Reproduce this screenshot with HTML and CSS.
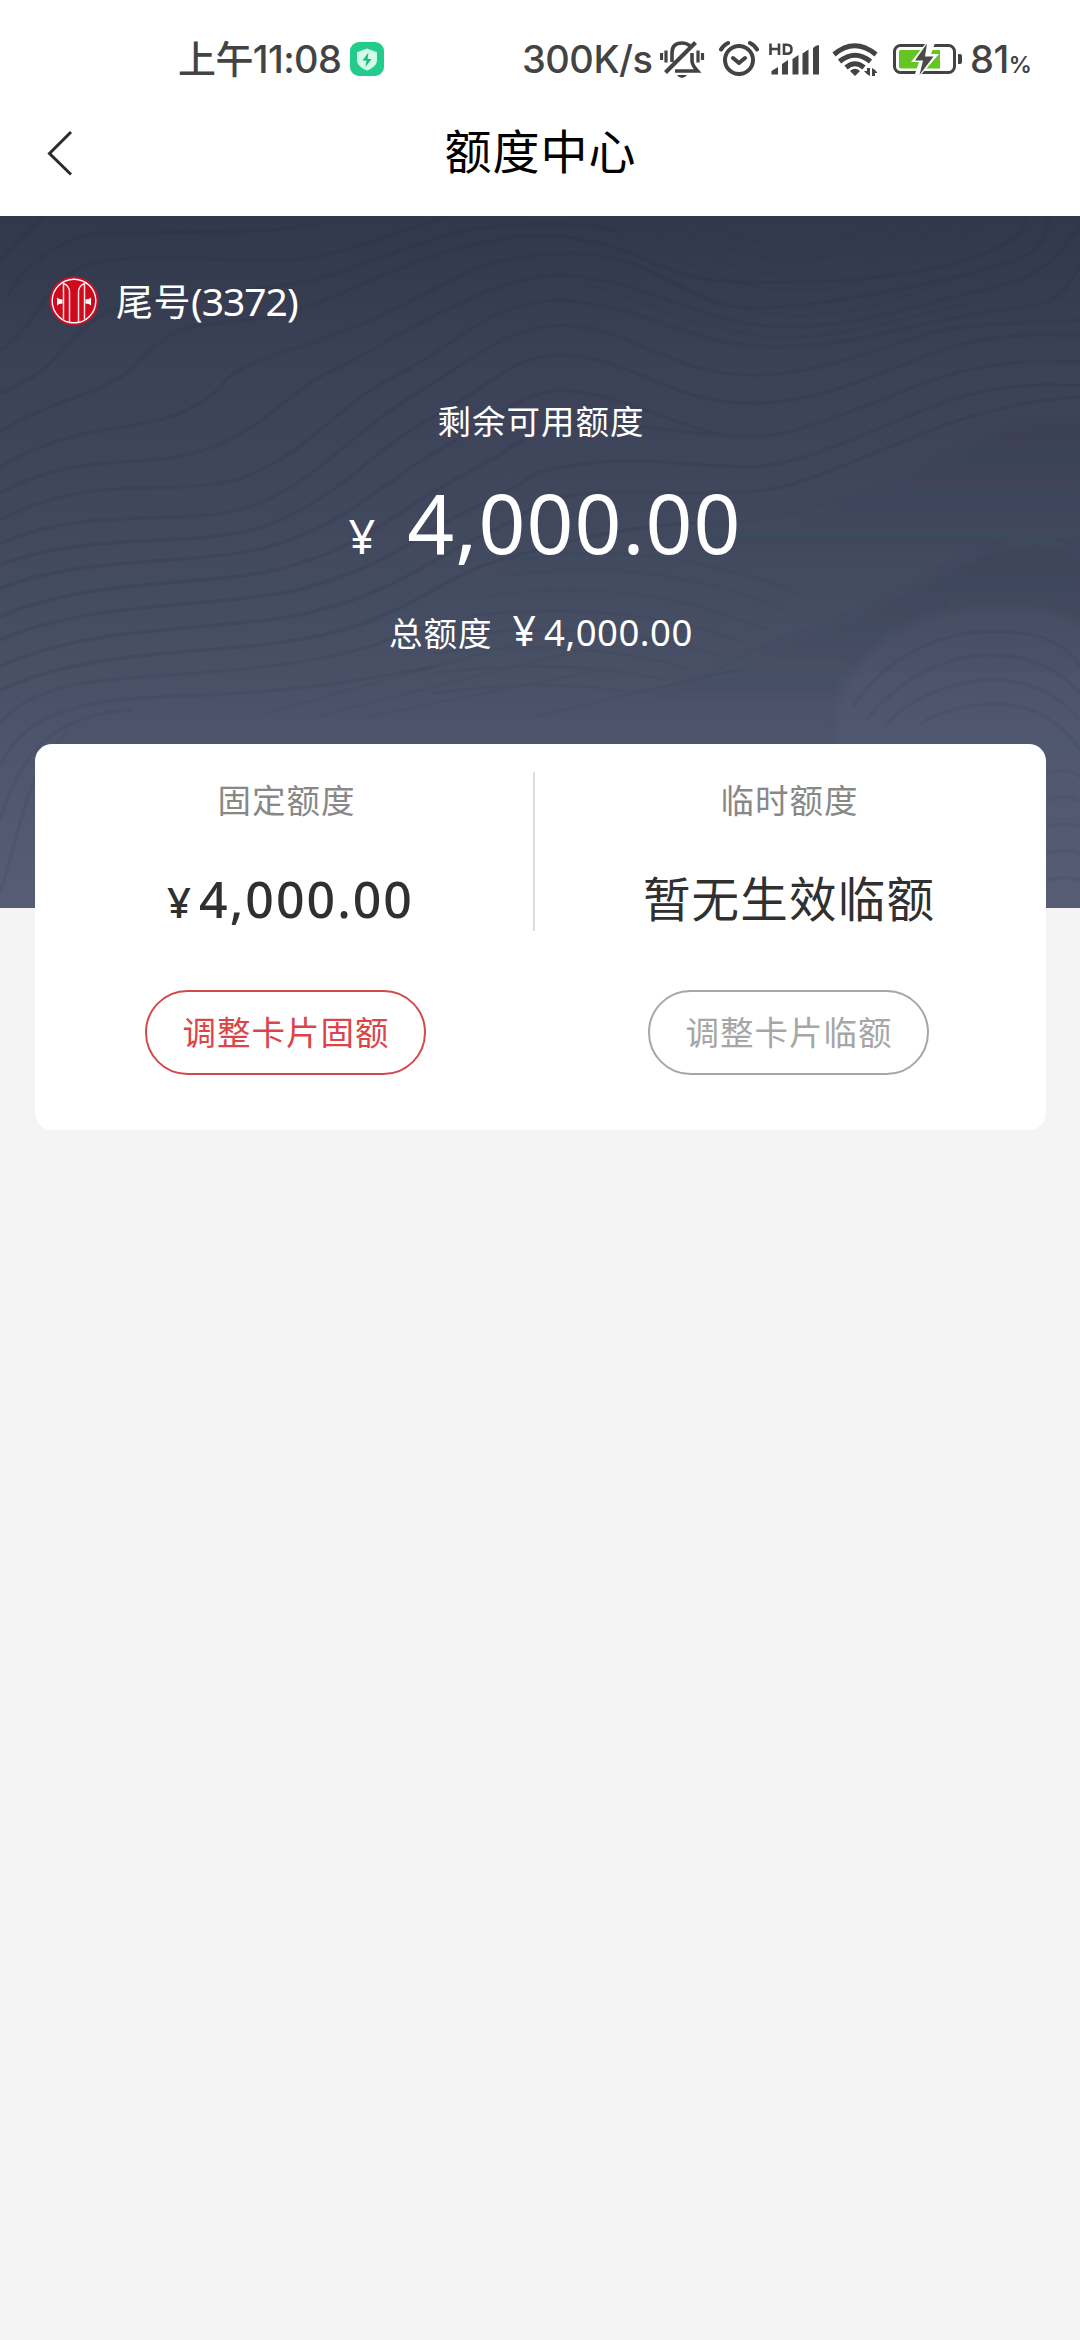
FILE: index.html
```html
<!DOCTYPE html>
<html lang="zh-CN">
<head>
<meta charset="utf-8">
<title>额度中心</title>
<link rel="stylesheet" href="styles.css">
</head>
<body>
<div class="status">
  <span class="time">上午11:08</span>
  <svg class="badge" width="34" height="34" viewBox="0 0 34 34">
    <rect width="34" height="34" rx="9" fill="#23cc8d"/>
    <path d="M17 6.500l10 3.800v7.700c0 5-4.500 8.400-10 10.500c-5.500-2.100-10-5.500-10-10.500v-7.700z" fill="#d3fbea"/>
    <path d="M18.500 10.500l-6 8h4l-1 6.500l6-8h-4z" fill="#1fb980"/>
  </svg>
  <span class="speed">300K/s</span>
  <svg class="bell" width="45" height="40" viewBox="659 39 45 40" fill="none" stroke="#434343" stroke-width="3.200">
    <path d="M660.500 53v7M665 50.500v12M697 50.500v12M701.500 53v7"/>
    <path d="M671 62V53q0-10 10-10q5 0 8 3M691 53v8q0 4 5.500 10H674" stroke-width="3.600"/>
    <path d="M664.500 72.500L694.500 42.500" stroke-width="4"/>
    <path d="M676 75h10q-2 3-5 3t-5-3z" fill="#434343" stroke="none"/>
  </svg>
  <svg class="alarm" width="40" height="40" viewBox="718 39 40 40" fill="none" stroke="#434343" stroke-width="4" stroke-linecap="round" stroke-linejoin="round">
    <circle cx="738" cy="60" r="14"/>
    <path d="M732 58l6 5l6-5M720 49.500q2-4 7-6.500M756 49.500q-2-4-7-6.500"/>
  </svg>
  <svg class="signal" width="51" height="40" viewBox="768 39 51 40">
    <path d="M769.500 43.500v11.500M778 43.500v11.500M769.500 49h8.500M783 44.700v9.100h3q4.500 0 4.500-4.500t-4.500-4.600z" fill="none" stroke="#434343" stroke-width="2.600"/>
    <path d="M770.500 71l6.500-4v7.500h-6.500zM781 64l6-4v14.500h-6zM791.500 59l6-4v19.500h-6zM801.500 53.500l6-4v25h-6zM812 48q3-3 6-3v29.500h-6z" fill="#434343"/>
  </svg>
  <svg class="wifi" width="47" height="40" viewBox="831 39 47 40">
    <g fill="none" stroke="#434343" stroke-width="5">
      <path d="M833 54.500q20.500-17.500 42 0M838.500 61.500q15.500-12.500 31 0M845 67.500q9-7.500 18 0"/>
    </g>
    <path d="M849 71q5-4.500 10 0l-5 5zM866 68h3v8q-3-1-6-5h3zM871 76v-8q3 1 5.500 5h-2.500v3z" fill="#434343"/>
  </svg>
  <svg class="battery" width="70" height="40" viewBox="892 39 70 40">
    <rect x="893.500" y="45.500" width="60" height="27" rx="6" fill="#fff" stroke="#434343" stroke-width="3"/>
    <path d="M957 54h2q2 0 2 2v6q0 2-2 2h-2z" fill="#434343"/>
    <path d="M898 52q0-2 2-2h39v18.500h-39q-2 0-2-2z" fill="#63c623"/>
    <path d="M925 43l-15 19h8l-5 15h5l20-23h-8l4-11z" fill="#fff"/>
    <path d="M926 43.500l-12 17h8l-3.500 14.500l14-18.500h-8.500z" fill="#4a4a4a"/>
  </svg>
  <span class="percent">81<small>%</small></span>
</div>
<header class="navbar">
  <svg class="back" width="28" height="48" viewBox="0 0 28 48"><path d="M25 3L3.500 24.500L25 45.500" fill="none" stroke="#2b2b2b" stroke-width="3"/></svg>
  <h1>额度中心</h1>
</header>
<main>
  <section class="hero">
    <svg class="waves" viewBox="0 48 3240 2076">
      <defs>
        <linearGradient id="ridge" x1="0" y1="0" x2="0" y2="1"><stop offset="0" stop-color="#343a50" stop-opacity=".36"/><stop offset=".7" stop-color="#343a50" stop-opacity="0"/></linearGradient>
        <linearGradient id="lobe" x1="0" y1="0" x2="0" y2="1"><stop offset="0" stop-color="#585e7a" stop-opacity=".18"/><stop offset=".3" stop-color="#585e7a" stop-opacity=".3"/><stop offset="1" stop-color="#585e7a" stop-opacity=".1"/></linearGradient>
        <filter id="soft" x="-5%" y="-5%" width="110%" height="110%"><feGaussianBlur stdDeviation="12"/></filter>
      </defs>
      <g filter="url(#soft)">
        <path d="M2100 980C2500 960 2700 840 2900 740S3060 670 3300 665V1250L2100 1100z" fill="url(#ridge)"/>
        <path d="M1680 1560C2100 1460 2250 1350 2450 1290S2900 1060 3000 1050S3180 1030 3300 1090V1700H1680z" fill="url(#ridge)"/>
        <path d="M2510 1570C2520 1400 2700 1230 2950 1220S3200 1260 3300 1310V2184H2510z" fill="url(#lobe)"/>
      </g>
      <g class="contours">
        <path d="M0 180Q60 120 130 48"/>
        <path d="M20 290C70 200 180 110 300 100S800 110 950 70"/>
        <path d="M0 450C110 390 130 230 280 190S800 200 950 170S1200 90 1350 48"/>
        <path d="M0 580C170 510 180 440 260 380C320 320 450 290 600 280S900 260 1040 210S1350 90 1480 80S1700 60 1850 90"/>
        <path d="M0 695C150 600 320 580 400 500S520 380 640 370S860 350 1000 290S1350 130 1560 110S1900 170 2040 220S2700 250 2900 180S3060 80 3080 48"/>
        <path d="M0 800C240 660 420 700 560 630S640 540 760 490S1000 420 1200 320S1450 170 1680 160S2000 260 2150 310S2750 260 2950 210S3120 120 3150 48"/>
        <path d="M0 880C250 740 450 820 640 740S850 580 1000 510S1450 230 1680 225C1950 240 2100 370 2330 380S2800 300 2950 270S3150 200 3240 80"/>
        <path d="M0 960C300 800 560 910 760 820S1000 620 1200 520S1450 310 1680 300C1950 320 2050 430 2300 440S2800 350 3000 330S3180 280 3240 200"/>
        <path d="M0 1030C300 900 600 1000 800 900S1050 700 1250 580S1500 390 1680 375C1900 380 2000 520 2250 525S2700 400 2900 380S3150 370 3240 360"/>
        <path d="M0 1095C300 980 620 1060 840 960S1100 760 1300 650S1530 470 1680 465C1900 470 2000 610 2260 610S2750 450 2950 420S3150 410 3240 405"/>
        <path d="M0 1165C300 1050 640 1110 870 1020S1150 840 1350 730S1540 590 1680 570C1900 580 2050 710 2250 710S2750 530 2950 500S3150 490 3240 485"/>
        <path d="M0 1250C300 1120 660 1170 900 1090S1200 920 1400 820S1540 700 1680 690C1900 650 2050 710 2250 710"/>
        <path d="M0 1320C300 1190 680 1230 930 1160S1250 1000 1430 920S1560 820 1700 800C1900 760 2050 800 2250 800S2750 610 2950 575S3150 560 3240 555"/>
        <path d="M0 1400C300 1260 700 1300 960 1230S1280 1080 1460 1000S1580 900 1760 880C1950 870 2150 890 2300 870S2750 690 2950 640S3150 600 3240 590"/>
        <path d="M0 1470C300 1330 720 1370 990 1300S1320 1130 1500 1080S1900 970 2100 970"/>
      </g>
      <g class="contours low">
        <path d="M0 1570C120 1420 400 1440 700 1410S1100 1350 1300 1270"/>
        <path d="M0 1700C60 1560 200 1500 500 1490S1000 1460 1300 1400"/>
        <path d="M0 1860C60 1660 160 1540 400 1530"/>
        <path d="M0 2080C60 1900 80 1700 200 1600"/>
        <path d="M2560 1520C2650 1380 2800 1300 2960 1295S3200 1330 3240 1400"/>
        <path d="M2600 1560C2700 1430 2850 1365 2970 1365S3180 1410 3240 1480"/>
        <path d="M2660 1570C2760 1470 2900 1435 3000 1440S3180 1490 3240 1560"/>
        <path d="M2760 1570C2850 1520 2950 1505 3030 1515S3200 1580 3240 1650"/>
        <path d="M3140 1720q60-20 100 10M3140 1800q60-20 100 5M3140 1880q60-15 100 0M3140 1960q60-15 100 0M3140 2040q60-15 100 0"/>
      </g>
      <g class="fine">
        <path d="M1720 48C1950 130 2150 260 2350 270S2750 200 2980 48"/>
        <path d="M1820 48C2000 110 2180 215 2350 225S2700 160 2890 48"/>
        <path d="M1920 48C2080 100 2200 170 2350 180S2650 120 2800 48"/>
        <path d="M2030 48C2150 90 2250 130 2360 138S2600 90 2700 48"/>
        <path d="M1680 100C1950 180 2100 330 2350 345S2760 260 2930 220"/>
        <path d="M1760 250C2000 330 2120 400 2330 410S2780 330 2960 300"/>
        <path d="M1560 1080Q1950 1010 2400 1180M1500 1130Q1950 1060 2350 1230M1450 1190Q1900 1120 2300 1290M1400 1250Q1850 1190 2240 1330M1340 1310Q1800 1250 2160 1370M1300 1360Q1750 1310 2080 1410M1300 1420Q1700 1370 2000 1440M1300 1480Q1650 1430 1900 1480"/>
        <path d="M800 1540Q1150 1440 1560 1330M950 1550Q1300 1460 1700 1360M1100 1550Q1450 1480 1850 1400M1600 1550Q1900 1480 2250 1400"/>
      </g>
    </svg>
    <div class="account">
      <svg class="logo" width="50" height="50" viewBox="0 0 50 50">
        <circle cx="25" cy="25" r="24.500" fill="#c9102a"/>
        <circle cx="25" cy="25" r="21.800" fill="#cf0a1c" stroke="#fff" stroke-width="1.400"/>
        <g fill="none" stroke="#ffe0e0" stroke-width="1.500">
          <path d="M14.500 43.500V7.500Q20.500 10 20.500 16V46"/>
          <path d="M35.500 43.500V7.500Q29.500 10 29.500 16V46"/>
        </g>
        <path d="M8 21.500q1.500 2 5.500 2v4q-4 0-5.500 2zM42 21.500q-1.500 2-5.500 2v4q4 0 5.500 2z" fill="#fff"/>
      </svg>
      <span class="tail">尾号<span class="digits">(3372)</span></span>
    </div>
    <div class="label">剩余可用额度</div>
    <div class="available"><span class="yen">¥</span><span>4,000.00</span></div>
    <div class="total"><span class="name">总额度</span><span class="yen">¥</span><span>4,000.00</span></div>
  </section>
  <section class="card">
    <div class="col fixed">
      <div class="caption">固定额度</div>
      <div class="value money"><span class="yen">¥</span><span>4,000.00</span></div>
      <button class="pill primary">调整卡片固额</button>
    </div>
    <div class="divider"></div>
    <div class="col temp">
      <div class="caption">临时额度</div>
      <div class="value">暂无生效临额</div>
      <button class="pill">调整卡片临额</button>
    </div>
  </section>
</main>
</body>
</html>
```

FILE: styles.css
```css
* { box-sizing: border-box; }
body {
  margin: 0;
  min-height: 2340px;
  background: #f4f4f4;
  font-family: "Noto Sans", "Noto Sans CJK SC", sans-serif;
  color: #303030;
}
svg { display: block; flex: none; }

.status {
  display: flex;
  align-items: center;
  height: 118px;
  padding-left: 178px;
  background: #fff;
  color: #434343;
  font: 500 38px/60px Inter, "Noto Sans CJK SC", sans-serif;
  white-space: nowrap;
}
.time { width: 172px; letter-spacing: -0.6px; }
.speed { width: 137px; margin-left: 138px; letter-spacing: -0.5px; }
.bell { margin-left: 1px; }
.alarm { margin-left: 14px; }
.signal { margin-left: 10px; }
.wifi { margin-left: 12px; }
.battery { margin-left: 14px; }
.percent { margin-left: 7px; letter-spacing: -0.5px; }
.percent small { font-size: 23px; font-weight: 600; line-height: 1; }

.navbar {
  position: relative;
  display: flex;
  align-items: center;
  justify-content: center;
  height: 98px;
  padding: 0 0 32px 1px;
  background: #fff;
}
.back { position: absolute; left: 46px; top: 11px; }
.navbar h1 {
  margin: 0;
  color: #000;
  font-size: 47px;
  font-weight: 400;
  line-height: 66px;
  letter-spacing: 1px;
}

.hero {
  position: relative;
  height: 692px;
  padding-top: 60px;
  background: linear-gradient(#31384b, #3b4156 22%, #444c61 55%, #4e556c 78%, #575d74);
  color: #fff;
  white-space: nowrap;
}
.waves { position: absolute; left: 0; top: 0; width: 100%; height: 100%; }
.contours, .fine { fill: none; stroke: #22283e; }
.contours { stroke-width: 11; opacity: .12; }
.contours.low { opacity: .08; }
.fine { stroke-width: 9; opacity: .05; }
.account, .label, .available, .total { position: relative; }
.account { display: flex; align-items: center; gap: 17px; height: 50px; padding-left: 49px; }
.tail { font-size: 37px; line-height: 50px; letter-spacing: .5px; }
.tail .digits { font-size: 39px; letter-spacing: -1px; }
.label { margin-top: 70px; padding-left: 2px; font-size: 33.5px; line-height: 50px; letter-spacing: 1px; text-align: center; }
.available {
  display: flex;
  align-items: baseline;
  justify-content: center;
  gap: 32px;
  height: 100px;
  margin-top: 26px;
  padding-left: 10px;
  font-size: 82px;
  line-height: 100px;
  letter-spacing: 1.1px;
}
.available .yen { font-size: 47px; letter-spacing: 0; }
.total {
  display: flex;
  align-items: baseline;
  justify-content: center;
  height: 50px;
  margin-top: 33px;
  padding-left: 2px;
  font-size: 36.5px;
  line-height: 50px;
  letter-spacing: .5px;
}
.total .name { font-size: 33.5px; letter-spacing: 1px; }
.total .yen { margin: 0 8px 0 20px; font-size: 41px; letter-spacing: 0; }

.card {
  position: relative;
  display: flex;
  width: 1011px;
  height: 386px;
  margin: -164px 34px 0 35px;
  border-radius: 17px;
  background: #fff;
  white-space: nowrap;
}
.col { display: flex; flex-direction: column; align-items: center; padding-top: 32px; }
.fixed { width: 498px; padding-left: 3px; }
.temp { width: 507px; }
.divider { width: 2px; height: 159px; margin-top: 28px; background: #dcdcdc; }
.caption { padding-left: 2px; color: #888; font-size: 33.5px; line-height: 48px; letter-spacing: 1px; }
.value { margin-top: 45px; height: 60px; padding-left: 1px; font-size: 47.5px; line-height: 60px; letter-spacing: 1.2px; }
.money {
  display: flex;
  align-items: baseline;
  gap: 8px;
  padding-left: 10px;
  font-size: 50px;
  font-weight: 500;
  letter-spacing: 2px;
}
.money .yen { font-size: 42px; letter-spacing: 0; }
.pill {
  width: 281px;
  height: 85px;
  margin-top: 61px;
  padding: 0 0 2px 1px;
  border: 2px solid #a6a6a6;
  border-radius: 43px;
  background: none;
  color: #a6a6a6;
  font: 400 33.5px/48px "Noto Sans", "Noto Sans CJK SC", sans-serif;
  letter-spacing: 1px;
}
.primary { border-color: #d24a4e; color: #dc4448; }
```
